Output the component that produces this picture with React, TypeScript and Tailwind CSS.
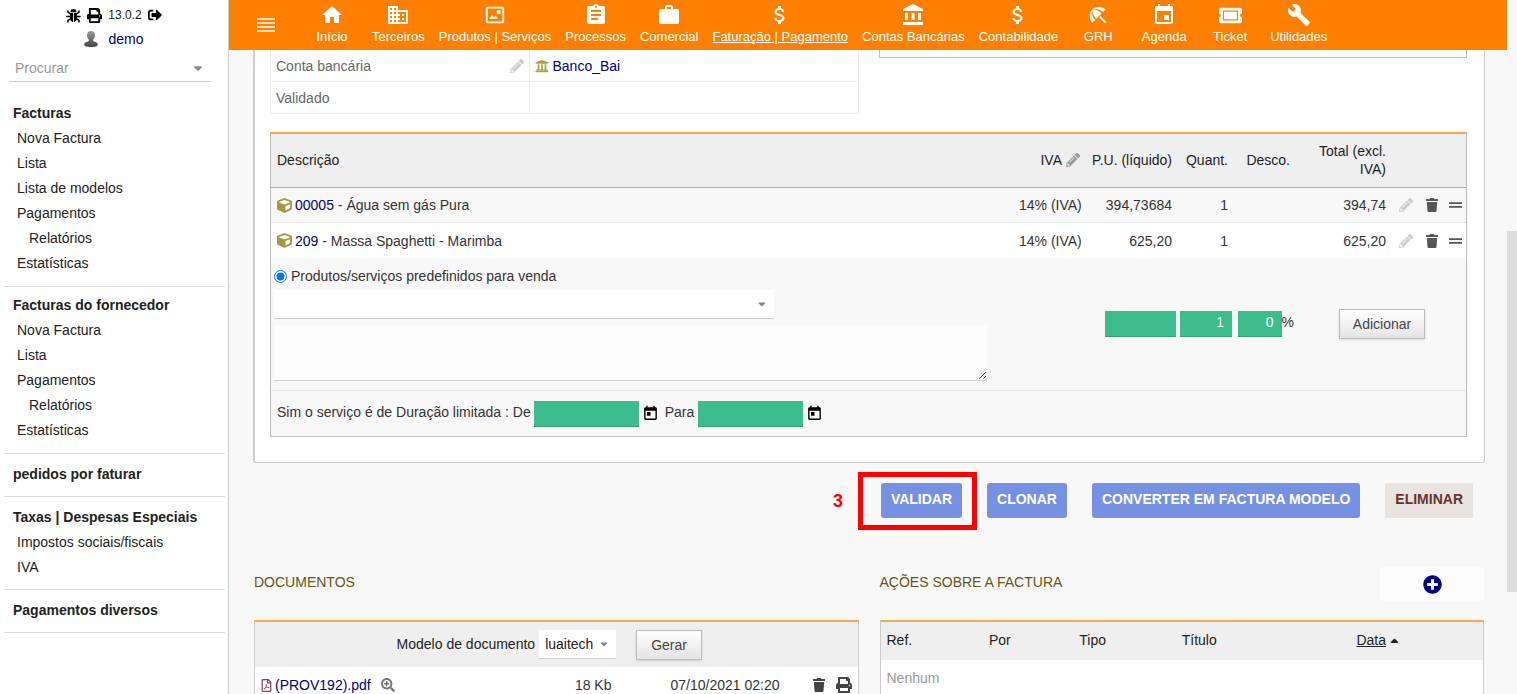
import React from 'react';
import {
  FaPrint,
  FaSignOutAlt,
  FaUniversity,
  FaPencilAlt,
  FaCube,
  FaSearchPlus,
  FaRegFilePdf,
  FaPlusCircle,
  FaTicketAlt,
  FaCaretDown,
  FaCaretUp,
} from 'react-icons/fa';
import {
  MdHome,
  MdDomain,
  MdAssignment,
  MdWork,
  MdAttachMoney,
  MdAccountBalance,
  MdBeachAccess,
  MdEvent,
  MdBuild,
  MdToday,
} from 'react-icons/md';

function ProductIcon() {
  return (
    <svg viewBox="0 0 24 24" className="h-[22px] w-[22px]" fill="currentColor" aria-hidden="true">
      <path d="M4 3h16a2 2 0 0 1 2 2v14a2 2 0 0 1-2 2H4a2 2 0 0 1-2-2V5a2 2 0 0 1 2-2zm0 2v14h16V5H4z" />
      <path d="M6 16l3-4 2 2.500 1.500-2L15.500 16z" />
      <path d="M14 7h4v4h-4z" />
    </svg>
  );
}

function MenuIcon() {
  return (
    <svg viewBox="0 0 20 16" className="h-4 w-5" stroke="currentColor" strokeWidth="1.400" aria-hidden="true">
      <path d="M1 2h18M1 6h18M1 10h18M1 14h18" />
    </svg>
  );
}

function BugIcon() {
  return (
    <svg viewBox="0 0 15 15" className="h-[15px] w-[15px]" aria-hidden="true">
      <path d="M4.500 4.200a3 3.200 0 0 1 6 0z" />
      <path d="M4 5h3.100v9C5 13.800 4 12.200 4 10zM7.900 5H11v5c0 2.200-1 3.800-3.100 4z" />
      <path
        fill="none"
        stroke="black"
        strokeWidth="1.500"
        d="M2 2.500v1.700L4.500 6M13 2.500v1.700L10.500 6M.3 8.500H4M11 8.500h3.700M4.500 10.800L2 12.500V14.500M10.500 10.800L13 12.500V14.500"
      />
    </svg>
  );
}

function TrashIcon() {
  return (
    <svg viewBox="0 0 14 16" className="h-4 w-[14px]" fill="currentColor" aria-hidden="true">
      <path d="M1 2h3.500l.8-1h3.400l.8 1H13v2H1zM1.800 5h10.400l-.7 9c-.1.800-.6 1-1.200 1H3.700c-.6 0-1.100-.2-1.200-1z" />
    </svg>
  );
}

function GripIcon() {
  return (
    <svg viewBox="0 0 14 8" className="h-2 w-[13px]" fill="currentColor" aria-hidden="true">
      <path d="M0 1h14v2H0zM0 5h14v2H0z" />
    </svg>
  );
}

function UserIcon() {
  return (
    <svg viewBox="0 0 14 16" className="h-4 w-[14px]" aria-hidden="true">
      <defs>
        <linearGradient id="user" x1="0" y1="0" x2="0" y2="1">
          <stop offset="0" stopColor="#999" />
          <stop offset="1" stopColor="#444" />
        </linearGradient>
      </defs>
      <path
        fill="url(#user)"
        d="M7 0c2.500 0 4 1.600 4 4.200 0 1.800-.7 3.500-1.800 4.400v1.400c1 .8 4.600.8 4.600 3.800 0 1.600-3 2.200-6.800 2.200S.2 15.400.2 13.800c0-3 3.600-3 4.600-3.800V8.600C3.700 7.700 3 6 3 4.200 3 1.600 4.500 0 7 0z"
      />
    </svg>
  );
}

const NAV = [
  { label: 'Início', icon: <MdHome size={24} /> },
  { label: 'Terceiros', icon: <MdDomain size={24} /> },
  { label: 'Produtos | Serviços', icon: <ProductIcon /> },
  { label: 'Processos', icon: <MdAssignment size={24} /> },
  { label: 'Comercial', icon: <MdWork size={24} /> },
  { label: 'Faturação | Pagamento', icon: <MdAttachMoney size={24} />, active: true },
  { label: 'Contas Bancárias', icon: <MdAccountBalance size={24} /> },
  { label: 'Contabilidade', icon: <MdAttachMoney size={24} /> },
  { label: 'GRH', icon: <MdBeachAccess size={22} /> },
  { label: 'Agenda', icon: <MdEvent size={24} /> },
  { label: 'Ticket', icon: <FaTicketAlt size={23} /> },
  { label: 'Utilidades', icon: <MdBuild size={24} /> },
];

const MENU = [
  {
    title: 'Facturas',
    items: ['Nova Factura', 'Lista', 'Lista de modelos', 'Pagamentos', '>Relatórios', 'Estatísticas'],
  },
  {
    title: 'Facturas do fornecedor',
    items: ['Nova Factura', 'Lista', 'Pagamentos', '>Relatórios', 'Estatísticas'],
  },
  { title: 'pedidos por faturar', items: [] },
  { title: 'Taxas | Despesas Especiais', items: ['Impostos sociais/fiscais', 'IVA'] },
  { title: 'Pagamentos diversos', items: [] },
];

const LINES = [
  { ref: '00005', name: 'Água sem gás Pura', price: '394,73684', total: '394,74', row: 'bg-[#f8f8f8]' },
  { ref: '209', name: 'Massa Spaghetti - Marimba', price: '625,20', total: '625,20', row: 'bg-white' },
];

const GREEN =
  'h-[26px] rounded-none border-b border-[#33a077] bg-[#3dbd8d] px-2 pb-[3px] text-right text-sm text-white outline-none';
const GREY_BUTTON =
  'h-[30px] border border-[#bbb] bg-linear-to-b from-white to-[#e4e4e4] text-sm text-[#444] shadow-sm';
const ACTION = 'flex h-[35px] items-center rounded-[3px] bg-[#7791e2] px-[10px] pb-[3px] text-sm font-bold text-white';

function Sidebar() {
  return (
    <aside className="w-[229px] shrink-0 border-r border-[#ccc] bg-white">
      <div className="flex h-[27px] items-center justify-center gap-[6px] pt-[3px] text-black">
        <BugIcon />
        <FaPrint size={15} />
        <span className="text-xs text-[#222]">13.0.2</span>
        <FaSignOutAlt size={14} />
      </div>
      <div className="flex h-6 items-center justify-center gap-[10px]">
        <UserIcon />
        <a href="#demo" className="text-sm text-[#00007a]">demo</a>
      </div>
      <div className="mt-[3px] mr-[17px] ml-[9px] flex h-7 items-center border-b border-[#ccc] px-[6px]">
        <input aria-label="Procurar" placeholder="Procurar" className="w-full min-w-0 bg-transparent text-sm outline-none placeholder:text-[#999]" />
        <FaCaretDown size={14} className="shrink-0 text-[#888]" />
      </div>
      <nav className="mt-[13px] mr-[3px] ml-1 text-sm text-[#222]">
        {MENU.map((section, i) => (
          <section
            key={section.title}
            className={
              i === 0
                ? 'pt-[6px] pb-[11px]'
                : i === 1
                  ? 'border-t border-[#ddd] pt-[6px] pb-[11px]'
                  : 'border-t border-[#ddd] pt-2 pb-[10px] last:border-b'
            }
          >
            <h2 className="flex h-6 items-center pl-[9px] font-bold">
              <a href="#menu">{section.title}</a>
            </h2>
            <ul>
              {section.items.map((item) => (
                <li
                  key={item}
                  className={item[0] === '>' ? 'flex h-[25px] items-center pl-[25px]' : 'flex h-[25px] items-center pl-[13px]'}
                >
                  <a href="#item">{item.replace('>', '')}</a>
                </li>
              ))}
            </ul>
          </section>
        ))}
      </nav>
    </aside>
  );
}

function TopBar() {
  return (
    <header className="flex h-[50px] shrink-0 bg-[#ff8000] pl-1 text-white">
      <button aria-label="Menu" className="flex w-[66px] items-center justify-center">
        <MenuIcon />
      </button>
      {NAV.map((item) => (
        <a
          key={item.label}
          href="#top"
          className="flex min-w-[66px] flex-col items-center px-[7px] pt-[3px] text-[13px] leading-[20px] whitespace-nowrap"
        >
          <span className="flex h-6 items-center">{item.icon}</span>
          <span className={item.active ? 'underline' : ''}>{item.label}</span>
        </a>
      ))}
    </header>
  );
}

function InvoiceLines() {
  return (
    <table className="mt-[18px] w-full table-fixed border-separate border-spacing-0 border border-t-2 border-[#bbb] border-t-[#ffa550] text-[#333]">
      <colgroup>
        <col />
        <col className="w-[67px]" />
        <col className="w-[92px]" />
        <col className="w-[56px]" />
        <col className="w-[62px]" />
        <col className="w-[96px]" />
        <col className="w-[27px]" />
        <col className="w-[25px]" />
        <col className="w-[22px]" />
      </colgroup>
      <thead>
        <tr className="h-[54px] bg-[#efefef] text-right text-[#222] *:border-b *:border-[#aaa] *:pr-[6px] *:pb-[2px] *:font-normal">
          <th className="pl-[6px] text-left">Descrição</th>
          <th>
            <span className="flex items-center justify-end gap-1">
              IVA <FaPencilAlt size={14} className="text-[#999]" />
            </span>
          </th>
          <th className="whitespace-nowrap">P.U. (líquido)</th>
          <th>Quant.</th>
          <th>Desco.</th>
          <th className="pl-4 leading-[18px]">Total (excl. IVA)</th>
          <th colSpan={3} aria-label="Ações" />
        </tr>
      </thead>
      <tbody>
        {LINES.map((line) => (
          <tr key={line.ref} className={`${line.row} h-[35px] text-right first:*:border-b *:border-[#e4e4e4] *:pr-[6px]`}>
            <td className="pl-[6px] text-left">
              <span className="flex items-center gap-[3px]">
                <FaCube size={15} className="text-[#a69944]" />
                <span>
                  <a href="#product" className="text-[#00007a]">{line.ref}</a> - {line.name}
                </span>
              </span>
            </td>
            <td className="whitespace-nowrap">14% (IVA)</td>
            <td>{line.price}</td>
            <td>1</td>
            <td />
            <td>{line.total}</td>
            <td className="pr-0!">
              <button aria-label="Editar" className="flex w-full justify-center text-[#ccc]">
                <FaPencilAlt size={14} />
              </button>
            </td>
            <td className="pr-0!">
              <button aria-label="Apagar" className="flex w-full justify-center text-[#555]">
                <TrashIcon />
              </button>
            </td>
            <td className="pr-0!">
              <button aria-label="Mover" className="flex w-full justify-center text-[#555]">
                <GripIcon />
              </button>
            </td>
          </tr>
        ))}
        <tr className="bg-[#f8f8f8] *:border-b *:border-[#e4e4e4]">
          <td colSpan={2} className="pt-2 pb-[9px] pl-[3px]">
            <label className="flex h-5 items-center gap-[4px]">
              <input type="radio" name="kind" defaultChecked className="h-[13px] w-[13px]" />
              Produtos/serviços predefinidos para venda
            </label>
            <div className="mt-1 flex w-[500px] items-center border-b border-[#ccc] bg-white pr-[6px]">
              <select aria-label="Produto" className="h-7 w-full appearance-none outline-none">
                <option />
              </select>
              <FaCaretDown size={12} className="text-[#888]" />
            </div>
            <textarea
              aria-label="Descrição"
              className="mt-[6px] block h-14 w-[713px] max-w-full resize border-b border-[#ccc] bg-[#fdfdfd] outline-none"
            />
          </td>
          <td className="pr-[2px] text-right">
            <input aria-label="P.U. (líquido)" className={`${GREEN} w-[71px]`} />
          </td>
          <td className="pr-[2px] text-right">
            <input aria-label="Quantidade" defaultValue="1" className={`${GREEN} w-[52px]`} />
          </td>
          <td className="pr-[2px] text-right whitespace-nowrap">
            <input aria-label="Desconto" defaultValue="0" className={`${GREEN} w-[44px]`} />%
          </td>
          <td colSpan={4} className="pl-[2px] text-center">
            <button className={`${GREY_BUTTON} px-[13px]`}>Adicionar</button>
          </td>
        </tr>
        <tr className="h-[45px] bg-[#f8f8f8]">
          <td colSpan={9} className="pl-[6px]">
            <div className="flex items-center">
              <label htmlFor="from" className="pb-1">Sim o serviço é de Duração limitada : De</label>
              <input id="from" className={`${GREEN} ml-[3px] w-[105px]`} />
              <MdToday size={17} className="ml-[3px] text-black" />
              <label htmlFor="to" className="ml-[6px] pb-1">Para</label>
              <input id="to" className={`${GREEN} ml-1 w-[105px]`} />
              <MdToday size={17} className="ml-[3px] text-black" />
            </div>
          </td>
        </tr>
      </tbody>
    </table>
  );
}

function Actions() {
  return (
    <div className="mt-5 flex justify-end gap-[25px] pr-3">
      <div className="relative">
        <button className={ACTION}>VALIDAR</button>
        <div className="pointer-events-none absolute -top-[11px] -right-[15px] -bottom-[12px] -left-[23px] border-[5px] border-[#f00]" />
        <span className="absolute top-[6px] -left-12 text-lg leading-6 font-bold text-[#f00]">3</span>
      </div>
      <button className={ACTION}>CLONAR</button>
      <button className={ACTION}>CONVERTER EM FACTURA MODELO</button>
      <button className="flex h-[35px] items-center bg-[#e9e4e0] px-[10px] pb-[3px] text-sm font-bold text-[#663333]">
        ELIMINAR
      </button>
    </div>
  );
}

function Documents() {
  return (
    <section>
      <h2 className="flex h-[34px] items-center pb-1 text-[#665511]">DOCUMENTOS</h2>
      <div className="mt-[19px] border border-t-2 border-[#ccc] border-t-[#ffa550] bg-white">
        <div className="flex h-[45px] items-center justify-center bg-[#efefef] pr-[14px] text-[#222]">
          <label htmlFor="model" className="pb-[2px]">Modelo de documento</label>
          <div className="ml-1 flex items-center border-b border-[#ccc] bg-white px-[6px]">
            <select id="model" className="h-7 appearance-none pr-1 outline-none">
              <option>luaitech</option>
            </select>
            <FaCaretDown size={12} className="text-[#888]" />
          </div>
          <button className={`${GREY_BUTTON} ml-5 px-[14px]`}>Gerar</button>
        </div>
        <table className="w-full table-fixed text-[#333]">
          <colgroup>
            <col />
            <col className="w-[120px]" />
            <col className="w-[168px]" />
            <col className="w-[78px]" />
          </colgroup>
          <tbody>
            <tr className="h-9 text-right">
              <td className="pl-[5px] text-left">
                <span className="flex items-center">
                  <FaRegFilePdf size={13} className="mr-[2px] text-[#804060]" />
                  <a href="#pdf" className="text-[#00007a]">(PROV192).pdf</a>
                  <FaSearchPlus size={14} className="ml-[10px] text-[#777]" />
                </span>
              </td>
              <td>18 Kb</td>
              <td>07/10/2021 02:20</td>
              <td>
                <span className="flex items-center justify-end gap-[10px] pr-[6px] text-[#444]">
                  <button aria-label="Apagar"><TrashIcon /></button>
                  <button aria-label="Imprimir"><FaPrint size={16} /></button>
                </span>
              </td>
            </tr>
          </tbody>
        </table>
      </div>
    </section>
  );
}

function Events() {
  return (
    <section>
      <div className="flex h-[34px] items-center justify-between">
        <h2 className="pb-1 text-[#665511]">AÇÕES SOBRE A FACTURA</h2>
        <button aria-label="Criar evento" className="flex h-[34px] w-[104px] items-center justify-center bg-[#fcfcfc] text-[#00007a]">
          <FaPlusCircle size={19} />
        </button>
      </div>
      <table className="mt-[19px] w-full table-fixed border-separate border-spacing-0 border border-t-2 border-[#ccc] border-t-[#ffa550] bg-white text-left">
        <colgroup>
          <col className="w-[17%]" />
          <col className="w-[15%]" />
          <col className="w-[17%]" />
          <col className="w-[29%]" />
          <col />
        </colgroup>
        <thead>
          <tr className="h-[38px] bg-[#efefef] text-[#222] *:pb-[2px] *:pl-[6px] *:font-normal">
            <th>Ref.</th>
            <th>Por</th>
            <th>Tipo</th>
            <th>Título</th>
            <th>
              <a href="#sort" className="inline-flex items-center gap-[2px]">
                <span className="underline">Data</span>
                <FaCaretUp size={13} />
              </a>
            </th>
          </tr>
        </thead>
        <tbody>
          <tr className="h-9">
            <td colSpan={5} className="pl-[6px] text-[#999]">Nenhum</td>
          </tr>
        </tbody>
      </table>
    </section>
  );
}

export default function App() {
  return (
    <div className="flex h-screen overflow-hidden bg-[#f8f8f8] font-['Liberation_Sans',Arial,sans-serif] text-sm">
      <Sidebar />
      <div className="flex min-w-0 flex-1 flex-col">
        <TopBar />
        <main className="min-h-0 flex-1 overflow-hidden pr-[22px] pl-6">
          <div className="rounded-b-[3px] border border-t-0 border-l-2 border-[#ccc] bg-white pr-[17px] pb-[25px] pl-[15px]">
            <div className="grid grid-cols-2 items-start gap-5">
              <table className="w-full table-fixed border-separate border-spacing-0 border-l border-[#eee] text-[#666]">
                <colgroup>
                  <col className="w-[44%]" />
                  <col />
                </colgroup>
                <tbody className="*:h-8 *:*:border-r *:*:border-b *:*:border-[#eee] *:*:px-[5px]">
                  <tr>
                    <td>
                      <span className="flex items-center justify-between">
                        Conta bancária
                        <FaPencilAlt size={14} className="text-[#ccc]" />
                      </span>
                    </td>
                    <td>
                      <a href="#bank" className="flex items-center gap-1 text-[#00007a]">
                        <FaUniversity size={14} className="text-[#b0a040]" />
                        Banco_Bai
                      </a>
                    </td>
                  </tr>
                  <tr>
                    <td>Validado</td>
                    <td />
                  </tr>
                </tbody>
              </table>
              <div className="h-2 border border-t-0 border-[#bbb]" />
            </div>
            <InvoiceLines />
          </div>
          <Actions />
          <div className="mt-[49px] grid grid-cols-2 gap-[21px] px-px whitespace-nowrap">
            <Documents />
            <Events />
          </div>
        </main>
      </div>
      <div className="flex w-[10px] shrink-0 flex-col bg-[#f8f8f8]">
        <div className="h-1/3" />
        <div className="h-[52%] bg-[#dcdcdc]" />
      </div>
    </div>
  );
}
